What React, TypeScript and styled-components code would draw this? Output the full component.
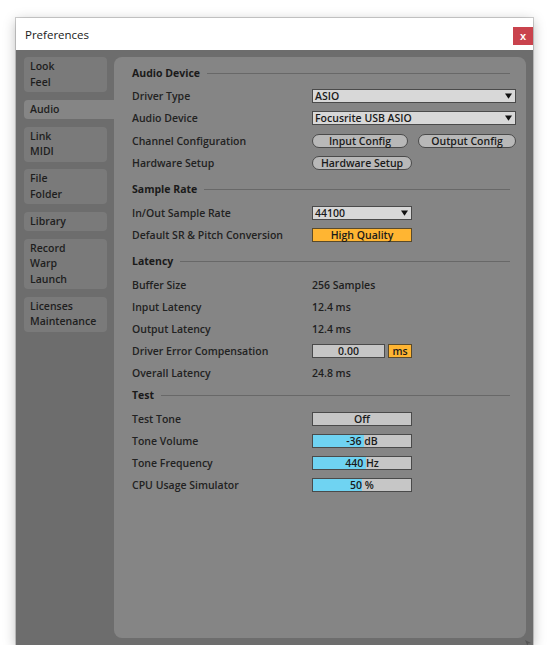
import { createGlobalStyle } from "styled-components";
import styled from "styled-components";

const GlobalStyle = createGlobalStyle`
  body {
    margin: 0;
    background: #ffffff;
    font-family: "Open Sans", "Liberation Sans", sans-serif;
  }
`;

const tabs = [
  ["Look", "Feel"],
  ["Audio"],
  ["Link", "MIDI"],
  ["File", "Folder"],
  ["Library"],
  ["Record", "Warp", "Launch"],
  ["Licenses", "Maintenance"],
];

const App = () => {
  return (
    <>
      <GlobalStyle />
      <Window>
        <TitleBar>
          <Title>Preferences</Title>
          <CloseButton>x</CloseButton>
        </TitleBar>
        <Body>
          <Sidebar>
            {tabs.map((lines) => (
              <Tab key={lines[0]} $active={lines[0] === "Audio"}>
                {lines.map((l) => (
                  <div key={l}>{l}</div>
                ))}
              </Tab>
            ))}
          </Sidebar>
          <Panel>
            {/* Audio Device */}
            <Section $spacing={2}>
              <SectionHeader>
                <span>Audio Device</span>
                <HeaderLine />
              </SectionHeader>
              <Row $height={20}>
                <Label>Driver Type</Label>
                <Dropdown $width={204}>
                  <span>ASIO</span>
                  <Arrow />
                </Dropdown>
              </Row>
              <Row $height={24}>
                <Label>Audio Device</Label>
                <Dropdown $width={204}>
                  <span>Focusrite USB ASIO</span>
                  <Arrow />
                </Dropdown>
              </Row>
              <Row>
                <Label>Channel Configuration</Label>
                <Controls>
                  <PillButton $width={96}>Input Config</PillButton>
                  <PillButton $width={98}>Output Config</PillButton>
                </Controls>
              </Row>
              <Row>
                <Label>Hardware Setup</Label>
                <PillButton $width={100}>Hardware Setup</PillButton>
              </Row>
            </Section>

            {/* Sample Rate */}
            <Section $spacing={2}>
              <SectionHeader>
                <span>Sample Rate</span>
                <HeaderLine />
              </SectionHeader>
              <Row>
                <Label>In/Out Sample Rate</Label>
                <Dropdown $width={100}>
                  <span>44100</span>
                  <Arrow />
                </Dropdown>
              </Row>
              <Row>
                <Label>Default SR &amp; Pitch Conversion</Label>
                <Toggle $width={100}>High Quality</Toggle>
              </Row>
            </Section>

            {/* Latency */}
            <Section $spacing={-2}>
              <SectionHeader>
                <span>Latency</span>
                <HeaderLine />
              </SectionHeader>
              <Row>
                <Label>Buffer Size</Label>
                <Value>256 Samples</Value>
              </Row>
              <Row>
                <Label>Input Latency</Label>
                <Value>12.4 ms</Value>
              </Row>
              <Row>
                <Label>Output Latency</Label>
                <Value>12.4 ms</Value>
              </Row>
              <Row>
                <Label>Driver Error Compensation</Label>
                <Controls $gap={3}>
                  <NumberBox $width={73}>0.00</NumberBox>
                  <Toggle $width={24}>ms</Toggle>
                </Controls>
              </Row>
              <Row>
                <Label>Overall Latency</Label>
                <Value>24.8 ms</Value>
              </Row>
            </Section>

            {/* Test */}
            <Section $spacing={0}>
              <SectionHeader>
                <span>Test</span>
                <HeaderLine />
              </SectionHeader>
              <Row>
                <Label>Test Tone</Label>
                <NumberBox $width={100}>Off</NumberBox>
              </Row>
              <Row>
                <Label>Tone Volume</Label>
                <Slider value="-36 dB" fill={52} />
              </Row>
              <Row>
                <Label>Tone Frequency</Label>
                <Slider value="440 Hz" fill={54} />
              </Row>
              <Row>
                <Label>CPU Usage Simulator</Label>
                <Slider value="50 %" fill={50} />
              </Row>
            </Section>
          </Panel>
          <ResizeGrip viewBox="0 0 8 8">
            <path d="M1 1 L7 4 L4 4.5 L3.5 7 Z" fill="#555" />
          </ResizeGrip>
        </Body>
      </Window>
    </>
  );
};

const Slider = ({ value, fill }: { value: string; fill: number }) => (
  <SliderBox>
    <SliderFill style={{ width: `${fill}%` }} />
    <SliderText>{value}</SliderText>
  </SliderBox>
);

const Arrow = () => (
  <ArrowSvg viewBox="0 0 8 6">
    <path d="M0 0 H8 L4 6 Z" fill="#111" />
  </ArrowSvg>
);

const Window = styled.div`
  margin: 18px 0 0 16px;
  width: 517px;
  height: 627px;
  display: flex;
  flex-direction: column;
  box-shadow: 0 0 0 1px rgba(0, 0, 0, 0.18), 0 3px 12px rgba(0, 0, 0, 0.28);
`;

const TitleBar = styled.div`
  height: 32px;
  background: #ffffff;
  display: flex;
  align-items: center;
  padding-left: 9px;
`;

const Title = styled.div`
  font-family: "Open Sans", "Liberation Sans", sans-serif;
  font-size: 11.5px;
  color: #1a1a1a;
`;

const CloseButton = styled.div`
  align-self: flex-start;
  margin: 9px 0 0 auto;
  width: 20px;
  height: 18px;
  background: #c9434d;
  color: #ffffff;
  font-family: "Liberation Sans", sans-serif;
  font-size: 11px;
  font-weight: 700;
  display: flex;
  align-items: center;
  justify-content: center;
`;

const Body = styled.div`
  position: relative;
  flex: 1;
  background: #6d6d6d;
  display: flex;
  padding: 7px 7px 7px 8px;
`;

const Sidebar = styled.div`
  width: 83px;
  display: flex;
  flex-direction: column;
  gap: 7.5px;
  flex-shrink: 0;
`;

const Tab = styled.div<{ $active?: boolean }>`
  background: ${(p) => (p.$active ? "#858585" : "#7a7a7a")};
  border-radius: ${(p) => (p.$active ? "4px 0 0 4px" : "4px")};
  margin-right: ${(p) => (p.$active ? "-7px" : "0")};
  padding: 2px 5px 2px 6px;
  font-size: 10.5px;
  font-weight: 600;
  line-height: 15.5px;
  color: #1e1e1e;
`;

const Panel = styled.div`
  flex: 1;
  margin-left: 7px;
  background: #858585;
  border-radius: 8px;
  padding: 3px 10px 0 18px;
`;

const Section = styled.div<{ $spacing: number }>`
  margin-bottom: ${(p) => p.$spacing}px;
`;

const SectionHeader = styled.div`
  height: 26px;
  display: flex;
  align-items: center;
  font-size: 10.5px;
  font-weight: 700;
  color: #1a1a1a;
`;

const HeaderLine = styled.div`
  flex: 1;
  height: 1px;
  background: #686868;
  margin: 0 6px 0 7px;
`;

const Row = styled.div<{ $height?: number }>`
  height: ${(p) => p.$height ?? 22}px;
  display: flex;
  align-items: center;
`;

const Label = styled.div`
  width: 180px;
  flex-shrink: 0;
  font-size: 10.5px;
  font-weight: 600;
  color: #222222;
`;

const Value = styled.div`
  font-size: 10.5px;
  font-weight: 600;
  color: #1e1e1e;
`;

const Controls = styled.div<{ $gap?: number }>`
  display: flex;
  align-items: center;
  gap: ${(p) => p.$gap ?? 10}px;
`;

const Dropdown = styled.div<{ $width: number }>`
  width: ${(p) => p.$width}px;
  height: 14px;
  box-sizing: border-box;
  background: #d8d8d8;
  border: 1px solid #4a4a4a;
  display: flex;
  align-items: center;
  justify-content: space-between;
  padding: 0 3px 0 2px;
  font-size: 10.5px;
  font-weight: 600;
  color: #1a1a1a;
`;

const ArrowSvg = styled.svg`
  width: 7px;
  height: 6px;
`;

const PillButton = styled.div<{ $width: number }>`
  width: ${(p) => p.$width}px;
  height: 14px;
  box-sizing: border-box;
  background: #b8b8b8;
  border: 1px solid #4a4a4a;
  border-radius: 7px;
  display: flex;
  align-items: center;
  justify-content: center;
  font-size: 10.5px;
  font-weight: 600;
  color: #1a1a1a;
`;

const Toggle = styled.div<{ $width: number }>`
  width: ${(p) => p.$width}px;
  height: 14px;
  box-sizing: border-box;
  background: #ffb532;
  border: 1px solid #5a4a2a;
  display: flex;
  align-items: center;
  justify-content: center;
  font-size: 10.5px;
  font-weight: 600;
  color: #1a1a1a;
`;

const NumberBox = styled.div<{ $width: number }>`
  width: ${(p) => p.$width}px;
  height: 14px;
  box-sizing: border-box;
  background: #c6c6c6;
  border: 1px solid #4a4a4a;
  display: flex;
  align-items: center;
  justify-content: center;
  font-size: 10.5px;
  font-weight: 600;
  color: #1a1a1a;
`;

const SliderBox = styled.div`
  position: relative;
  width: 100px;
  height: 14px;
  box-sizing: border-box;
  background: #c6c6c6;
  border: 1px solid #4a4a4a;
  display: flex;
  align-items: center;
  justify-content: center;
`;

const SliderFill = styled.div`
  position: absolute;
  left: 0;
  top: 0;
  bottom: 0;
  background: #6fd3f2;
`;

const SliderText = styled.span`
  position: relative;
  font-size: 10.5px;
  font-weight: 600;
  color: #1a1a1a;
`;

const ResizeGrip = styled.svg`
  position: absolute;
  right: 1px;
  bottom: -2px;
  width: 8px;
  height: 8px;
`;

export default App;
